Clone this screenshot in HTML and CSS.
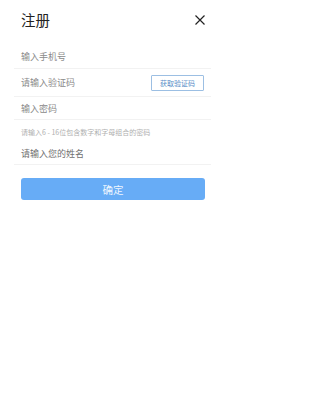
FILE: index.html
```html
<!DOCTYPE html>
<html lang="zh">
<head>
<meta charset="utf-8">
<link rel="stylesheet" href="styles.css">
</head>
<body>
<div class="page">
  <header class="header">
    <h1 class="title">注册</h1>
    <svg class="close" viewBox="0 0 10 10" width="10" height="10"><path d="M0.5 0.5L9.5 9.5M9.5 0.5L0.5 9.5" stroke="#222" stroke-width="1.2" fill="none"/></svg>
  </header>
  <div class="form">
    <div class="row row-first"><span class="ph">输入手机号</span></div>
    <div class="row row-code"><span class="ph">请输入验证码</span><span class="code-btn">获取验证码</span></div>
    <div class="row row-pass"><span class="ph">输入密码</span></div>
    <div class="hint">请输入6 - 16位包含数字和字母组合的密码</div>
    <div class="row row-name"><span class="ph ph-dark">请输入您的姓名</span></div>
  </div>
  <div class="actions"><button class="submit">确定</button></div>
</div>
</body>
</html>
```
FILE: styles.css
```css
html, body {
  margin: 0;
  padding: 0;
  background: #ffffff;
}
body {
  font-family: "Noto Sans CJK SC", "Noto Sans", sans-serif;
  color: #333;
}
.page {
  width: 225px;
}
.header {
  display: flex;
  align-items: center;
  justify-content: space-between;
  height: 40px;
  padding: 0 20px 0 21px;
}
.title {
  margin: 0;
  font-size: 14.5px;
  font-weight: 400;
  color: #222;
  line-height: 1;
}
.close {
  display: block;
  width: 10px;
  height: 10px;
}
.form {
  margin: 5px 14px 0;
}
.row {
  display: flex;
  align-items: center;
  justify-content: space-between;
  padding: 0 7px;
  border-bottom: 1px solid #f2f2f2;
  box-sizing: border-box;
}
.row-first { height: 24px; }
.row-code { height: 28px; }
.row-pass { height: 23px; }
.row-name { height: 22px; }
.ph {
  font-size: 9px;
  color: #8a8a8a;
  line-height: 1;
}
.ph-dark {
  color: #707070;
}
.code-btn {
  display: flex;
  align-items: center;
  justify-content: center;
  width: 53px;
  height: 16px;
  box-sizing: border-box;
  border: 1px solid #9cbfe3;
  font-size: 7px;
  color: #5a8fc8;
  border-radius: 1px;
}
.hint {
  height: 23px;
  display: flex;
  align-items: center;
  padding: 0 7px;
  font-size: 7px;
  color: #b0b0b0;
  white-space: nowrap;
}
.actions {
  padding: 13px 20px 0 21px;
}
.submit {
  display: block;
  width: 100%;
  height: 22px;
  border: 0;
  border-radius: 3px;
  background: #67acf6;
  color: #eef6ff;
  font-family: inherit;
  font-size: 10.5px;
  padding: 0;
}
```
